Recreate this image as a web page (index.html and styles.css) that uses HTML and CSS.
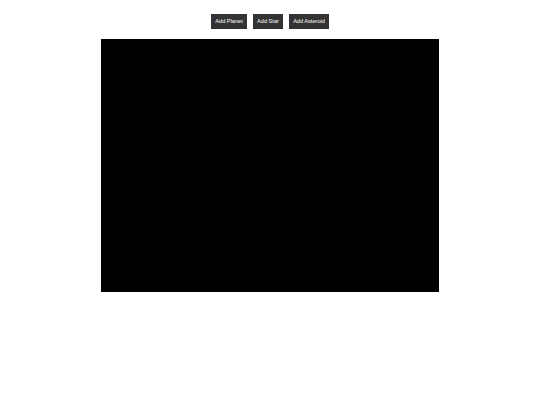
FILE: index.html
```html
<!DOCTYPE html>
<html>
<head>
<meta charset="utf-8">
<link rel="stylesheet" href="styles.css">
</head>
<body>
<div class="controls">
  <button class="btn w1">Add Planet</button>
  <button class="btn w2">Add Star</button>
  <button class="btn w3">Add Asteroid</button>
</div>
<div class="stage">
  <canvas class="space" width="338" height="253"></canvas>
</div>
</body>
</html>
```
FILE: styles.css
```css
html, body {
  margin: 0;
  padding: 0;
  background: #ffffff;
}
body {
  font-family: "Liberation Sans", Arial, sans-serif;
}
.controls {
  display: flex;
  justify-content: center;
  gap: 6px;
  padding-top: 14px;
}
.btn {
  height: 15px;
  padding: 0;
  border: none;
  background: #333333;
  color: #ffffff;
  font-family: "Liberation Sans", Arial, sans-serif;
  font-size: 5.6px;
  line-height: 15px;
  text-align: center;
}
.w1 { width: 36px; }
.w2 { width: 30px; }
.w3 { width: 40px; }
.stage {
  display: flex;
  justify-content: center;
  margin-top: 10px;
}
.space {
  display: block;
  width: 338px;
  height: 253px;
  background: #000000;
}
```
